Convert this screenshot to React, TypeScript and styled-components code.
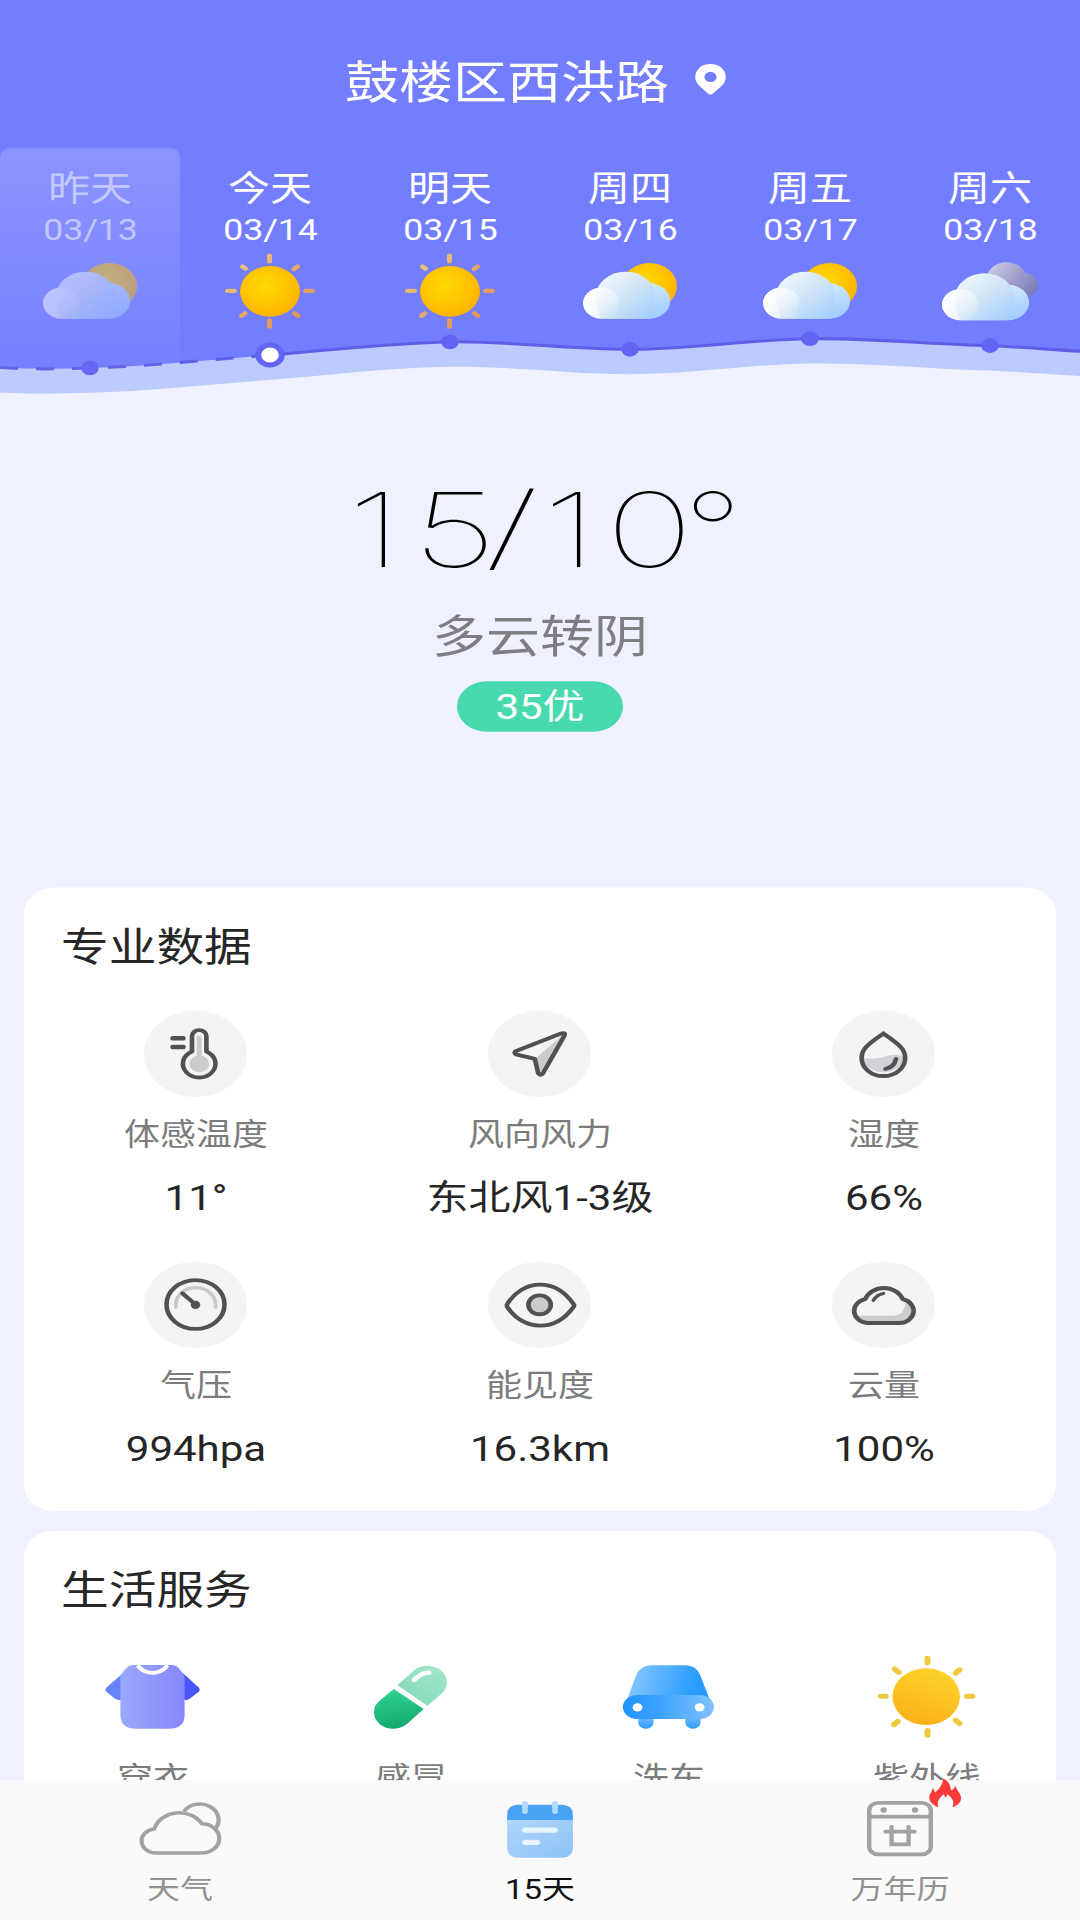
import React from 'react';
import styled, { createGlobalStyle } from 'styled-components';

const GlobalStyle = createGlobalStyle`
  * { box-sizing: border-box; }
  html, body { margin: 0; padding: 0; background: #f0f1ff; }
  body { font-family: Roboto, "Noto Sans CJK SC", sans-serif; }
  svg { display: block; flex: none; overflow: visible; }
`;

/* The layout is designed on a 1080x2280 phone screen and fitted to a 1080x1920 window. */
const Viewport = styled.div`
  width: 1080px;
  height: 1920px;
  overflow: hidden;
`;

const Screen = styled.div`
  display: flex;
  flex-direction: column;
  width: 1080px;
  height: 2280px;
  background: #f0f1ff;
  transform: scaleY(0.842105);
  transform-origin: 0 0;
`;

const Header = styled.header`
  position: relative;
  flex: none;
  height: 480px;
`;

const Backdrop = styled.svg`
  position: absolute;
  inset: 0;
`;

const Location = styled.div`
  position: relative;
  display: flex;
  align-items: center;
  justify-content: center;
  gap: 26px;
  height: 176px;
  padding: 24px 9px 0 0;
`;

const Place = styled.h1`
  margin: 0;
  font-size: 54px;
  font-weight: 400;
  line-height: 80px;
  color: #fff;
`;

const PinIcon = styled.svg`
  margin-top: -11px;
`;

const Days = styled.div`
  position: relative;
  display: grid;
  grid-template-columns: repeat(6, 180px);
  height: 304px;
`;

const Day = styled.div<{ $past?: boolean }>`
  display: flex;
  flex-direction: column;
  align-items: center;
  padding-top: 19px;
  border-radius: 10px;
  color: #fff;
  background: ${(p) =>
    p.$past ? 'linear-gradient(rgba(255,255,255,.17), rgba(255,255,255,.1) 40%, rgba(255,255,255,0))' : 'none'};
  & > * { opacity: ${(p) => (p.$past ? 0.5 : 1)}; }
`;

const DayName = styled.span`
  height: 59px;
  font-size: 42px;
  line-height: 60px;
`;

const DayDate = styled.span`
  height: 42px;
  padding-left: 1px;
  font-size: 35.6px;
  line-height: 39px;
`;

const Summary = styled.section`
  display: flex;
  flex-direction: column;
  align-items: center;
  flex: none;
  height: 574px;
  padding-top: 74px;
`;

const Temperature = styled.div`
  height: 150px;
  padding-left: 5px;
  font-family: Inter, sans-serif;
  font-size: 122px;
  font-weight: 100;
  line-height: 150px;
  color: #000;
  transform: scaleX(1.22);
`;

const One = styled.span<{ $after: number }>`
  padding: 0 ${(p) => p.$after}px 0 6px;
`;

const Slash = styled.span`
  display: inline-block;
  margin: 0 -0.5px 0 -7.5px;
  transform: scale(1.15, 0.91);
  transform-origin: 50% 26px;
`;

const Degree = styled.span`
  display: inline-block;
  margin-left: -12px;
  transform: scaleX(0.86);
`;

const Condition = styled.div`
  margin-top: 13px;
  font-size: 54px;
  line-height: 80px;
  color: #7e7e82;
`;

const AirBadge = styled.div`
  display: flex;
  align-items: center;
  justify-content: center;
  width: 166px;
  height: 60px;
  margin-top: 12px;
  padding-top: 1px;
  border-radius: 30px;
  background: #48daae;
  color: #fff;
  font-size: 42px;
  line-height: 60px;
`;

const Card = styled.section<{ $height: number }>`
  flex: none;
  width: 1032px;
  height: ${(p) => p.$height}px;
  margin: 0 24px 24px;
  padding-top: 37px;
  border-radius: 30px;
  background: #fff;
`;

const CardTitle = styled.h2`
  margin: 0 0 0 37px;
  font-size: 47.700px;
  font-weight: 400;
  line-height: 68px;
  color: #262626;
`;

const MetricGrid = styled.div`
  display: grid;
  grid-template-columns: repeat(3, 344px);
  grid-auto-rows: 298px;
  margin-top: 41px;
`;

const Metric = styled.div`
  display: flex;
  flex-direction: column;
  align-items: center;
`;

const IconDisc = styled.div`
  width: 103px;
  height: 103px;
  margin-right: 1px;
  border-radius: 50%;
  background: #f3f4f6;
`;

const MetricLabel = styled.span`
  margin-top: 19px;
  font-size: 36px;
  line-height: 52px;
  color: #7c7c7c;
`;

const MetricValue = styled.span`
  margin-top: 18px;
  font-size: 42px;
  line-height: 62px;
  color: #262626;
`;

const ServiceGrid = styled.div`
  display: grid;
  grid-template-columns: repeat(4, 258px);
  margin-top: 42px;
`;

const Service = styled.div`
  display: flex;
  flex-direction: column;
  align-items: center;
`;

const ServiceLabel = styled.span`
  margin-top: 21px;
  font-size: 36px;
  line-height: 52px;
  color: #7c7c7c;
`;

const Content = styled.main`
  flex: none;
  height: 2114px;
  overflow: hidden;
`;

const NavBar = styled.nav`
  display: grid;
  grid-template-columns: repeat(3, 360px);
  height: 166px;
  background: #fafafa;
`;

const NavItem = styled.div<{ $active?: boolean }>`
  display: flex;
  flex-direction: column;
  align-items: center;
  padding-top: 16px;
  color: ${(p) => (p.$active ? '#111' : '#929292')};
`;

const NavIcon = styled.div`
  position: relative;
  width: 90px;
  height: 80px;
`;

const NavLabel = styled.span`
  margin-top: 10px;
  font-size: 33px;
  line-height: 48px;
`;

const Flame = styled.svg`
  position: absolute;
  left: 74px;
  top: -18px;
`;

const LINE =
  'M0 436.5C40 439 60 438 90 437C150 435 210 427 270 421.6C330 416 390 407 450 406C510 405 570 415 630 414.8C690 415 750 403 810 402.2C870 401 930 409 990 410.5C1020 412 1050 415 1080 417';
const PAST = 'M0 436.5C40 439 60 438 90 437C150 435 210 427 270 421.6';
const FUTURE =
  'M270 421.6C330 416 390 407 450 406C510 405 570 415 630 414.8C690 415 750 403 810 402.2C870 401 930 409 990 410.5C1020 412 1050 415 1080 417';
const NODES: [number, number][] = [
  [90, 437], [450, 406.1], [630, 414.8], [810, 402.2], [990, 410.5],
];

const Wave = () => (
  <Backdrop width="1080" height="480" viewBox="0 0 1080 480">
    <path d={`${LINE}V0H0Z`} fill="#bccbff" transform="translate(0 29.5)" />
    <rect width="1080" height="40" fill="#737eff" />
    <path d={`${LINE}V0H0Z`} fill="#737eff" />
    <path d={PAST} fill="none" stroke="#5d60e6" strokeWidth="3.6" strokeDasharray="18 18" />
    <path d={FUTURE} fill="none" stroke="#5d60e6" strokeWidth="3.6" />
    {NODES.map(([x, y]) => (
      <circle key={x} cx={x} cy={y} r="8.7" fill="#6264f4" />
    ))}
    <circle cx="270" cy="421.6" r="11.8" fill="#fff" stroke="#6264f4" strokeWidth="6" />
  </Backdrop>
);

const HiddenDefs = styled.svg`
  position: absolute;
`;

const Defs = () => (
  <HiddenDefs width="0" height="0">
    <defs>
      <radialGradient id="sunDisc" cx=".42" cy=".4" r=".62">
        <stop offset="0" stopColor="#ffdc00" />
        <stop offset="1" stopColor="#ffb300" />
      </radialGradient>
      <linearGradient id="cloudMain" x1=".1" y1=".1" x2=".9" y2=".95">
        <stop offset="0" stopColor="#eef7fd" />
        <stop offset=".5" stopColor="#d0e4f5" />
        <stop offset="1" stopColor="#a5d0fe" />
      </linearGradient>
      <linearGradient id="cloudBase" gradientUnits="userSpaceOnUse" x1="50" y1="45" x2="122" y2="84">
        <stop offset="0" stopColor="#fafdff" />
        <stop offset=".5" stopColor="#d3e8fe" />
        <stop offset="1" stopColor="#9fcbff" />
      </linearGradient>
      <linearGradient id="cloudLobe" gradientUnits="userSpaceOnUse" x1="48" y1="50" x2="82" y2="76">
        <stop offset="0" stopColor="#fff" stopOpacity=".9" />
        <stop offset="1" stopColor="#fff" stopOpacity="0" />
      </linearGradient>
      <linearGradient id="cloudRight" x1="0" y1="0" x2=".3" y2="1">
        <stop offset="0" stopColor="#d9edff" />
        <stop offset="1" stopColor="#a3cfff" />
      </linearGradient>
      <linearGradient id="greyCloud" gradientUnits="userSpaceOnUse" x1="92" y1="20" x2="136" y2="52">
        <stop offset="0" stopColor="#c8c6e4" />
        <stop offset="1" stopColor="#7678b4" />
      </linearGradient>
      <linearGradient id="ray" gradientUnits="userSpaceOnUse" x1="50" y1="10" x2="130" y2="90">
        <stop offset="0" stopColor="#e4cb80" />
        <stop offset=".5" stopColor="#e6a768" />
        <stop offset="1" stopColor="#e0924f" />
      </linearGradient>
    </defs>
  </HiddenDefs>
);

const SunIcon = () => (
  <svg width="180" height="100" viewBox="0 0 180 100">
    <g fill="none" stroke="url(#ray)" strokeWidth="5" strokeLinecap="round">
      <path d="M89.500 7.500L89.510 14.500" /><path d="M89.500 84.500L89.510 92" />
      <path d="M47.500 49.500L54.500 49.510" /><path d="M125.500 49.500L132.500 49.510" />
      <path d="M62.500 20.500L65.500 23" /><path d="M117.500 20.500L114 23.500" />
      <path d="M61.500 79L65 76" /><path d="M118 79L114.500 76" />
    </g>
    <circle cx="90" cy="50" r="30" fill="url(#sunDisc)" />
  </svg>
);

const WhiteCloud = () => (
  <g>
    <path d="M61.500 82.400A18.400 18.400 0 1 1 61.500 45.600L109 40.500A21 21 0 0 1 109.200 82.400Z" fill="url(#cloudBase)" />
    <circle cx="109.200" cy="61.400" r="21" fill="url(#cloudRight)" />
    <path d="M56 62A29.800 29.800 0 1 1 115.400 51.700C116 62 112 75 104 82.400H61Z" fill="url(#cloudMain)" />
    <path d="M61.500 82.400A18.400 18.400 0 1 1 79.900 64L76 82.400Z" fill="url(#cloudLobe)" />
  </g>
);

const PartlyIcon = () => (
  <svg width="180" height="100" viewBox="0 0 180 100">
    <circle cx="109.500" cy="43.800" r="27.500" fill="url(#sunDisc)" />
    <WhiteCloud />
  </svg>
);

const OvercastIcon = () => (
  <svg width="180" height="100" viewBox="0 0 180 100">
    <circle cx="123.700" cy="42.500" r="14.500" fill="url(#greyCloud)" />
    <circle cx="106.500" cy="35" r="19.700" fill="url(#greyCloud)" />
    <g transform="translate(-1.100 1.800)"><WhiteCloud /></g>
  </svg>
);

const INK = '#505153';
const MetricSvg = ({ children }: { children: React.ReactNode }) => (
  <svg width="103" height="103" viewBox="0 0 103 103" fill="none" stroke={INK} strokeWidth="4.600" strokeLinecap="round" strokeLinejoin="round">
    {children}
  </svg>
);

const ThermoIcon = () => (
  <MetricSvg>
    <path d="M55.200 32.500V60" stroke="#ccc" strokeWidth="5" />
    <circle cx="55.200" cy="63.300" r="10" fill="#ccc" stroke="none" />
    <path d="M48 48.600V30.400A7.200 7.200 0 0 1 62.400 30.400V48.600A16.300 16.300 0 1 1 48 48.600Z" />
    <path d="M29 32.900H39M29 43.200H39" strokeWidth="5.400" />
  </MetricSvg>
);

const ArrowIcon = () => (
  <MetricSvg>
    <path d="M46.800 57.500L76.500 27L52.500 76Z" fill="#ccc" stroke="none" />
    <path d="M27.500 48.400L73 27.300Q78 25.500 76.300 30L55 74.500Q52.200 78 50.200 74.500L46.800 57.500L28 52Q25.500 50 27.500 48.400Z" />
  </MetricSvg>
);

const DropIcon = () => (
  <MetricSvg>
    <path d="M30 56C40 58 46 57 53 54.500C60 52.500 66 52 73 55A21.800 21.300 0 0 1 30 56Z" fill="#d1d2d6" stroke="none" />
    <path d="M51.400 27.300C45 32.500 38 38 34 43.500C31 47.500 29.600 51.500 29.600 56.500A21.800 21.300 0 0 0 73.200 56.500C73.200 51.500 71.800 47.500 68.800 43.500C64.800 38 57.800 32.500 51.400 27.300Z" strokeLinejoin="miter" />
    <path d="M64 57.400C63 63.500 59 68 53.500 69.300" />
  </MetricSvg>
);

const GaugeIcon = () => (
  <MetricSvg>
    <path d="M31.800 54.500V51A19.900 19.900 0 0 1 71.600 51V54.500" stroke="#c9c9ca" strokeWidth="3.800" />
    <circle cx="51.500" cy="51.100" r="29" />
    <path d="M38.500 37.800L51.500 51.100" />
    <circle cx="51.500" cy="51.500" r="4.800" fill={INK} stroke="none" />
  </MetricSvg>
);

const EyeIcon = () => (
  <MetricSvg>
    <path d="M19.300 50.500C27 36 39 27.500 52 27.500S77 36 85.500 50.500Q86.700 52 85.500 54C77 68 65 76.200 52 76.200S27 68 19.300 54Q18.300 52 19.300 50.500Z" />
    <circle cx="51.600" cy="51.500" r="11.200" fill="#ccc" />
  </MetricSvg>
);

const CloudIcon = () => (
  <MetricSvg>
    <path d="M24 64.500H62C69 63.500 73 59 74 46Q82 50 81.500 59Q81 72 67 73H35.500Q27 73 24 64.500Z" fill="#ccc" stroke="none" />
    <path d="M35.500 73H67.300A14.300 14.300 0 0 0 70.700 44.800A19.900 19.900 0 0 0 33.200 44.800A14.300 14.300 0 0 0 35.500 73Z" />
    <path d="M41.400 46C43.500 42 47 39 51.400 38" strokeWidth="3.800" />
  </MetricSvg>
);

const ShirtIcon = () => (
  <svg width="100" height="100" viewBox="0 0 100 100">
    <defs>
      <linearGradient id="shirtBody"><stop offset="0" stopColor="#9aa9fb" /><stop offset="1" stopColor="#8588fc" /></linearGradient>
    </defs>
    <path d="M19 23L3.800 38.500Q1.200 41.800 4 44.500L12.500 52.500Q15.500 54.500 19 53.500Z" fill="#6483fc" />
    <path d="M80 22L95.500 38.500Q98 41.800 95.200 44.500L87 52Q84 54.500 80 53.500Z" fill="#4b55fb" />
    <path d="M31 12.200H68C75 12.200 77 18 81.600 24.500V71.800Q81.600 87.800 65.600 87.800H33.400Q17.400 87.800 17.400 71.800V24.500C22 18 24 12.200 31 12.200Z" fill="url(#shirtBody)" />
    <path d="M35.600 14.200Q41 21.500 49.500 21.500T63.400 14.200" fill="none" stroke="#fff" strokeWidth="4.600" strokeLinecap="round" />
  </svg>
);

const CapsuleIcon = () => (
  <svg width="100" height="100" viewBox="0 0 100 100">
    <defs>
      <linearGradient id="capTop" x1="0" y1="1" x2=".7" y2="0"><stop offset="0" stopColor="#7ed8b4" /><stop offset="1" stopColor="#a0e6c8" /></linearGradient>
      <linearGradient id="capLow" x1=".3" y1="0" x2=".5" y2="1"><stop offset="0" stopColor="#30d294" /><stop offset="1" stopColor="#14a86d" /></linearGradient>
    </defs>
    <path d="M36.400 36.300L52.900 18.600A19.500 19.500 0 0 1 81 45.600L66.500 60.500Z" fill="url(#capTop)" />
    <path d="M32.800 40.700L18.300 54.800A19.500 19.500 0 0 0 46.500 81.800L62.600 64.500Z" fill="url(#capLow)" />
    <path d="M53 30Q61 21 68 21.300" fill="none" stroke="#fff" strokeWidth="5" strokeLinecap="round" />
  </svg>
);

const CarIcon = () => (
  <svg width="100" height="100" viewBox="0 0 100 100">
    <defs>
      <linearGradient id="carRoof" x1="0" y1=".6" x2="1" y2=".7"><stop offset="0" stopColor="#86c6ff" /><stop offset=".75" stopColor="#2e9fff" /><stop offset="1" stopColor="#2598ff" /></linearGradient>
      <linearGradient id="carBody"><stop offset="0" stopColor="#2196ff" /><stop offset=".35" stopColor="#379fff" /><stop offset="1" stopColor="#7fc2ff" /></linearGradient>
      <linearGradient id="carWheel" x1="0" y1="0" x2="0" y2="1"><stop offset=".5" stopColor="#61b2ff" /><stop offset="1" stopColor="#2f9cff" /></linearGradient>
    </defs>
    <rect x="19.200" y="66" width="15.400" height="21.800" rx="7.500" fill="url(#carWheel)" />
    <rect x="66.200" y="66" width="15.400" height="21.800" rx="7.500" fill="url(#carWheel)" />
    <path d="M8.500 52L16.500 26Q21 12.600 32 12.600H67Q77 12.600 81.500 25L91 54Z" fill="url(#carRoof)" />
    <rect x="3.900" y="47.800" width="91" height="28.500" rx="14.200" fill="url(#carBody)" />
    <circle cx="18.500" cy="62.500" r="4.900" fill="#fff" />
    <circle cx="80.600" cy="62.500" r="4.900" fill="#fff" />
  </svg>
);

const UvIcon = () => (
  <svg width="100" height="100" viewBox="0 0 100 100">
    <defs>
      <linearGradient id="uvDisc" x1=".7" y1="0" x2=".3" y2="1"><stop offset="0" stopColor="#fdd42b" /><stop offset="1" stopColor="#fcaf17" /></linearGradient>
    </defs>
    <g fill="none" stroke="#ecc93f" strokeWidth="6" strokeLinecap="round">
      <path d="M50.500 4.200V9.500M50.500 90V95.500M3.800 49.200H8.800M90 49.200H95.500M17.700 17L21.800 20.800M82.500 18L78.700 21.800M17 83L20.800 79.200M78.700 77.800L82.500 81.500" />
    </g>
    <circle cx="49.200" cy="49.800" r="33.700" fill="url(#uvDisc)" />
  </svg>
);

const NavCloud = () => (
  <svg width="90" height="80" viewBox="0 0 90 80" fill="none" stroke="#a2a2a2" strokeWidth="4.200" strokeLinejoin="round">
    <path d="M21 70.500H66.800A17.300 17.300 0 0 0 67 35.800A26 26 0 0 0 19.300 41.800A14.400 14.400 0 0 0 21 70.500Z" />
    <path d="M49 21A18.700 18.700 0 1 1 80.700 41" />
  </svg>
);

const NavCalendar = () => (
  <svg width="90" height="80" viewBox="0 0 90 80">
    <defs>
      <linearGradient id="calBody" x1="0" y1="0" x2="1" y2="1"><stop offset="0" stopColor="#b0d6fa" /><stop offset="1" stopColor="#8cc2f5" /></linearGradient>
    </defs>
    <path d="M12.100 30H77.900V64Q77.900 76 65.900 76H24.100Q12.100 76 12.100 64Z" fill="url(#calBody)" />
    <path d="M12.100 31.300V25Q12.100 13 24.100 13H65.900Q77.900 13 77.900 25V31.300Z" fill="#4ba3f5" />
    <g stroke="#b5d8fb" strokeWidth="5.800" strokeLinecap="round"><path d="M30 11.600V21.300M60 11.600V21.300" /></g>
    <g stroke="#e8f4ff" strokeWidth="6.200" strokeLinecap="round"><path d="M30.200 43.200H59.800M30.200 57.800H42" /></g>
  </svg>
);

const NavAlmanac = () => (
  <>
    <svg width="90" height="80" viewBox="0 0 90 80" fill="none" stroke="#a2a2a2" strokeWidth="4.400">
      <rect x="14.200" y="10.800" width="61.600" height="61.200" rx="9" />
      <path d="M14.200 27.300H75.800" />
      <circle cx="28.600" cy="19.400" r="3.200" fill="#a2a2a2" stroke="none" />
      <circle cx="60" cy="19.400" r="3.200" fill="#a2a2a2" stroke="none" />
      <path d="M30.500 45.100H59.500M36.600 39.500V60.200H53.600V39.500" strokeLinecap="round" />
    </svg>
    <Flame width="33" height="35" viewBox="0 0 33 35">
      <path d="M14 0C20 3 21.500 8 22 14C24.500 13 26 11 26 8C27 13 31.500 17 32 22C32.500 28 29 32 23.500 34C25.500 28 24 23 18 18.500C18 21 17.500 22 16.500 22.500C15.500 21 15 20 15 18.500C10 23 7.500 28 9.500 34C4 32 0 28 .300 22C.500 18 3.500 15 3.700 11C5 13 5.500 14.500 6 16.500C10 13 14 7 14 0Z" fill="#fb3a3a" />
    </Flame>
  </>
);

const days = [
  { name: '昨天', date: '03/13', Icon: PartlyIcon, past: true },
  { name: '今天', date: '03/14', Icon: SunIcon },
  { name: '明天', date: '03/15', Icon: SunIcon },
  { name: '周四', date: '03/16', Icon: PartlyIcon },
  { name: '周五', date: '03/17', Icon: PartlyIcon },
  { name: '周六', date: '03/18', Icon: OvercastIcon },
];

const metrics = [
  { label: '体感温度', value: '11°', Icon: ThermoIcon },
  { label: '风向风力', value: '东北风1-3级', Icon: ArrowIcon },
  { label: '湿度', value: '66%', Icon: DropIcon },
  { label: '气压', value: '994hpa', Icon: GaugeIcon },
  { label: '能见度', value: '16.3km', Icon: EyeIcon },
  { label: '云量', value: '100%', Icon: CloudIcon },
];

const services = [
  { label: '穿衣', Icon: ShirtIcon },
  { label: '感冒', Icon: CapsuleIcon },
  { label: '洗车', Icon: CarIcon },
  { label: '紫外线', Icon: UvIcon },
];

const tabs = [
  { label: '天气', Icon: NavCloud },
  { label: '15天', Icon: NavCalendar, active: true },
  { label: '万年历', Icon: NavAlmanac },
];

export default function App() {
  return (
    <Viewport lang="zh-CN">
      <GlobalStyle />
      <Screen>
        <Defs />
        <Content>
          <Header>
            <Wave />
            <Location>
              <Place>鼓楼区西洪路</Place>
              <PinIcon width="31" height="37" viewBox="0 0 31 37">
                <path d="M15.500 0A15.300 15.300 0 0 1 26.500 26L17.500 35.500Q15.500 37 13.500 35.500L4.500 26A15.300 15.300 0 0 1 15.500 0Z" fill="#fff" />
                <circle cx="15.500" cy="15.400" r="6.100" fill="#737eff" />
              </PinIcon>
            </Location>
            <Days>
              {days.map(({ name, date, Icon, past }) => (
                <Day key={date} $past={past}>
                  <DayName>{name}</DayName>
                  <DayDate>{date}</DayDate>
                  <Icon />
                </Day>
              ))}
            </Days>
          </Header>
          <Summary>
            <Temperature>
              <One $after={9}>1</One>5<Slash>/</Slash><One $after={7}>1</One>0<Degree>°</Degree>
            </Temperature>
            <Condition>多云转阴</Condition>
            <AirBadge>35优</AirBadge>
          </Summary>
          <Card $height={740}>
            <CardTitle>专业数据</CardTitle>
            <MetricGrid>
              {metrics.map(({ label, value, Icon }) => (
                <Metric key={label}>
                  <IconDisc><Icon /></IconDisc>
                  <MetricLabel>{label}</MetricLabel>
                  <MetricValue>{value}</MetricValue>
                </Metric>
              ))}
            </MetricGrid>
          </Card>
          <Card $height={400}>
            <CardTitle>生活服务</CardTitle>
            <ServiceGrid>
              {services.map(({ label, Icon }) => (
                <Service key={label}>
                  <Icon />
                  <ServiceLabel>{label}</ServiceLabel>
                </Service>
              ))}
            </ServiceGrid>
          </Card>
        </Content>
        <NavBar>
          {tabs.map(({ label, Icon, active }) => (
            <NavItem key={label} $active={active}>
              <NavIcon><Icon /></NavIcon>
              <NavLabel>{label}</NavLabel>
            </NavItem>
          ))}
        </NavBar>
      </Screen>
    </Viewport>
  );
}
